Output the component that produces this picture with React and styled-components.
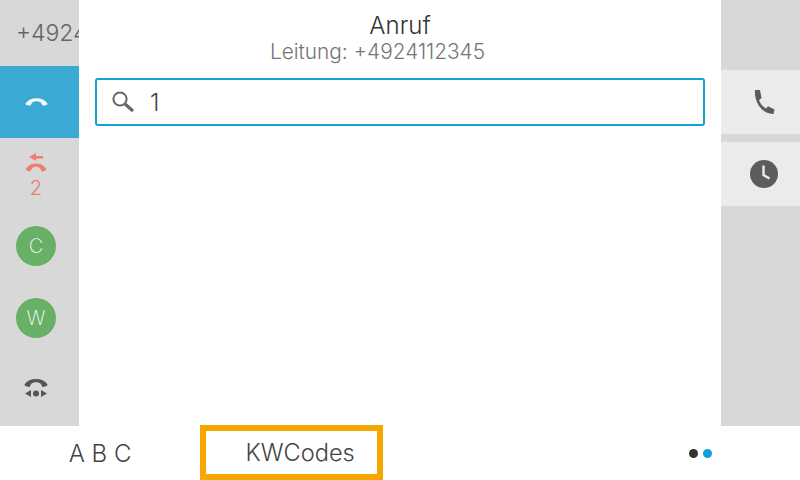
import React from "react";
import styled, { createGlobalStyle } from "styled-components";

const GlobalStyle = createGlobalStyle`
  html, body {
    margin: 0;
    padding: 0;
    background: #fff;
    font-family: Inter, "Liberation Sans", sans-serif;
    font-weight: 300;
  }
`;

const Screen = styled.div`
  width: 800px;
  height: 480px;
  display: flex;
  flex-direction: column;
  overflow: hidden;
`;
const Main = styled.div`
  height: 426px;
  display: flex;
`;
const LeftColumn = styled.div`
  width: 79px;
  background: #d8d8d8;
  display: flex;
  flex-direction: column;
`;
const LineHeader = styled.div`
  height: 66px;
  padding-left: 16px;
  overflow: hidden;
  white-space: nowrap;
  line-height: 66px;
  font-size: 23px;
  color: #666;
`;
const CallRow = styled.div`
  height: 72px;
  padding-right: 7px;
  display: flex;
  flex-direction: column;
  align-items: center;
  justify-content: center;
  background: ${(p) => (p.$active ? "#3aa9d3" : "transparent")};
`;
const HeldRow = styled(CallRow)`
  box-sizing: border-box;
  padding-top: 15px;
  justify-content: flex-start;
`;
const HeldCount = styled.div`
  margin-top: 4px;
  font-size: 20px;
  line-height: 22px;
  color: #ee7d6f;
`;
const Avatar = styled.div`
  width: 40px;
  height: 40px;
  border-radius: 50%;
  background: #67b066;
  color: #f2f8f2;
  font-size: 20px;
  font-weight: 200;
  display: flex;
  align-items: center;
  justify-content: center;
`;
const Center = styled.div`
  flex: 1;
  padding: 12px 16px 0;
  background: #fff;
`;
const Title = styled.div`
  text-align: center;
  font-size: 24px;
  line-height: 28px;
  color: #333;
`;
const SubTitle = styled.div`
  padding-right: 45px;
  text-align: center;
  font-size: 20.8px;
  line-height: 24px;
  color: #757575;
`;
const SearchBox = styled.div`
  margin-top: 14px;
  height: 48px;
  box-sizing: border-box;
  border: 2px solid #17a0d4;
  border-radius: 3px;
  padding-left: 14px;
  display: flex;
  align-items: center;
  gap: 15px;
`;
const SearchInput = styled.input`
  flex: 1;
  border: none;
  outline: none;
  padding: 0;
  background: transparent;
  font-family: inherit;
  font-weight: 300;
  font-size: 24px;
  color: #444;
`;
const RightColumn = styled.div`
  width: 79px;
  padding-top: 70px;
  background: #d8d8d8;
  display: flex;
  flex-direction: column;
  gap: 8px;
`;
const SideButton = styled.div`
  height: 64px;
  padding-left: 7px;
  background: #ebebeb;
  display: flex;
  align-items: center;
  justify-content: center;
`;
const SoftKeys = styled.div`
  flex: 1;
  display: flex;
  align-items: center;
  position: relative;
  background: #fff;
`;
const SoftKey = styled.div`
  width: 200px;
  text-align: center;
  font-size: 24px;
  color: #444;
`;
const SelectedKey = styled.div`
  position: absolute;
  left: 200px;
  top: -1px;
  width: 183px;
  height: 55px;
  box-sizing: border-box;
  border: 6px solid #f7a800;
  padding-left: 39.5px;
  display: flex;
  align-items: center;
  font-size: 23.6px;
  color: #444;
`;
const Dots = styled.div`
  margin-left: auto;
  margin-right: 88px;
  display: flex;
  gap: 5px;
`;
const Dot = styled.span`
  width: 9px;
  height: 9px;
  border-radius: 50%;
  background: ${(p) => p.$color};
`;

const HANDSET =
  "M0.5 6.5 C3 2.8 7 1 12 1 C17 1 21 2.8 23.5 6.5 L23 8 L18.5 9 L16.5 5.6 C15 4.6 13.5 4.2 12 4.2 C10.5 4.2 9 4.6 7.5 5.6 L5.5 9 L1 8 Z";

const Handset = ({ color }) => (
  <svg width="23" height="10" viewBox="0 0 24 10">
    <path d={HANDSET} fill={color} />
  </svg>
);

const HeldIcon = () => (
  <svg width="22" height="20" viewBox="0 0 22 20">
    <path d="M4 4 L11 0 L11 3 L18 3 L18 5.4 L11 5.4 L11 8 Z" fill="#ee7d6f" />
    <g transform="translate(0.5 9.5) scale(0.88 1)">
      <path d={HANDSET} fill="#ee7d6f" />
    </g>
  </svg>
);

const ParkIcon = () => (
  <svg width="24" height="24" viewBox="0 0 24 24">
    <path d={HANDSET} fill="#555" />
    <path d="M7 12 L1 15.5 L7 19 Z M17 12 L23 15.5 L17 19 Z" fill="#555" />
    <circle cx="12" cy="15.5" r="3" fill="#555" />
  </svg>
);

const SearchIcon = () => (
  <svg width="24" height="24" viewBox="0 0 24 24">
    <circle cx="9" cy="9" r="6.6" fill="none" stroke="#666" strokeWidth="2" />
    <path d="M14 14 L22 21" stroke="#666" strokeWidth="3.2" />
  </svg>
);

const PhoneIcon = () => (
  <svg width="21" height="26" viewBox="0 0 21 26">
    <path
      d="M1 1 H6 L7.5 9 L5 11.2 C6.5 15 9 17.8 12 19.4 L14 17.2 L20.5 20.4 L19.5 25 C9 25.5 0 14 1 1 Z"
      fill="#5c5c5c"
    />
  </svg>
);

const ClockIcon = () => (
  <svg width="28" height="28" viewBox="0 0 28 28">
    <circle cx="14" cy="14" r="14" fill="#5c5c5c" />
    <path d="M13.5 5.5 V15 L19.5 18.5" fill="none" stroke="#ebebeb" strokeWidth="2.4" />
  </svg>
);

export default function App() {
  return (
    <Screen>
      <GlobalStyle />
      <Main>
        <LeftColumn>
          <LineHeader>+4924112345</LineHeader>
          <CallRow $active>
            <Handset color="#f4f9fb" />
          </CallRow>
          <HeldRow>
            <HeldIcon />
            <HeldCount>2</HeldCount>
          </HeldRow>
          <CallRow>
            <Avatar>C</Avatar>
          </CallRow>
          <CallRow>
            <Avatar>W</Avatar>
          </CallRow>
          <CallRow>
            <ParkIcon />
          </CallRow>
        </LeftColumn>
        <Center>
          <Title>Anruf</Title>
          <SubTitle>Leitung: +4924112345</SubTitle>
          <SearchBox>
            <SearchIcon />
            <SearchInput defaultValue="1" />
          </SearchBox>
        </Center>
        <RightColumn>
          <SideButton>
            <PhoneIcon />
          </SideButton>
          <SideButton>
            <ClockIcon />
          </SideButton>
        </RightColumn>
      </Main>
      <SoftKeys>
        <SoftKey>A B C</SoftKey>
        <SelectedKey>KWCodes</SelectedKey>
        <Dots>
          <Dot $color="#333" />
          <Dot $color="#0fa0dc" />
        </Dots>
      </SoftKeys>
    </Screen>
  );
}
